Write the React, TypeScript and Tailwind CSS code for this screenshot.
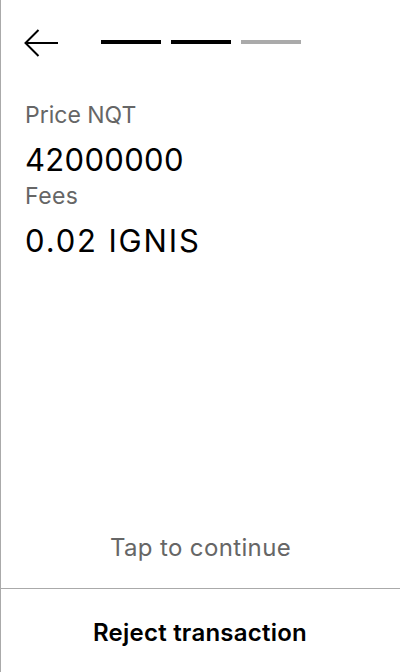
import React from "react";

export default function App() {
  return (
    <div className="w-[400px] h-[672px] bg-white border-l border-[#aaaaaa] flex flex-col text-black font-[Inter,'Noto_Sans',sans-serif]">
      <header className="h-[86px] flex items-center pl-[23px]">
        <svg width="34" height="28" viewBox="0 0 34 28" fill="none" stroke="black" strokeWidth="2" className="-mt-[1px]">
          <path d="M34 14H2" />
          <path d="M14.5 1L1.5 14L14.5 27" />
        </svg>
        <div className="flex gap-[10px] ml-[43px] -mt-[2px]">
          <div className="w-[60px] h-[4px] bg-black" />
          <div className="w-[60px] h-[4px] bg-black" />
          <div className="w-[60px] h-[4px] bg-[#aaaaaa]" />
        </div>
      </header>
      <main className="pl-[24px] pr-[23px] pt-[14px] flex flex-col">
        <div className="text-[23px] leading-[30px] mb-[8px] text-[#666666]">Price NQT</div>
        <div className="text-[31px] leading-[43px] tracking-[0.01em]">42000000</div>
        <div className="text-[23px] leading-[30px] mb-[8px] text-[#666666] tracking-[0.02em]">Fees</div>
        <div className="text-[31px] leading-[43px] tracking-[0.06em]">0.02 IGNIS</div>
      </main>
      <div className="flex-1" />
      <div className="h-[80px] flex items-center justify-center text-[24px] tracking-[0.015em] text-[#666666]">
        Tap to continue
      </div>
      <button className="h-[84px] pt-[4px] border-t border-[#aaaaaa] -ml-[1px] flex items-center justify-center text-[24px] tracking-[0.01em] font-semibold">
        Reject transaction
      </button>
    </div>
  );
}
